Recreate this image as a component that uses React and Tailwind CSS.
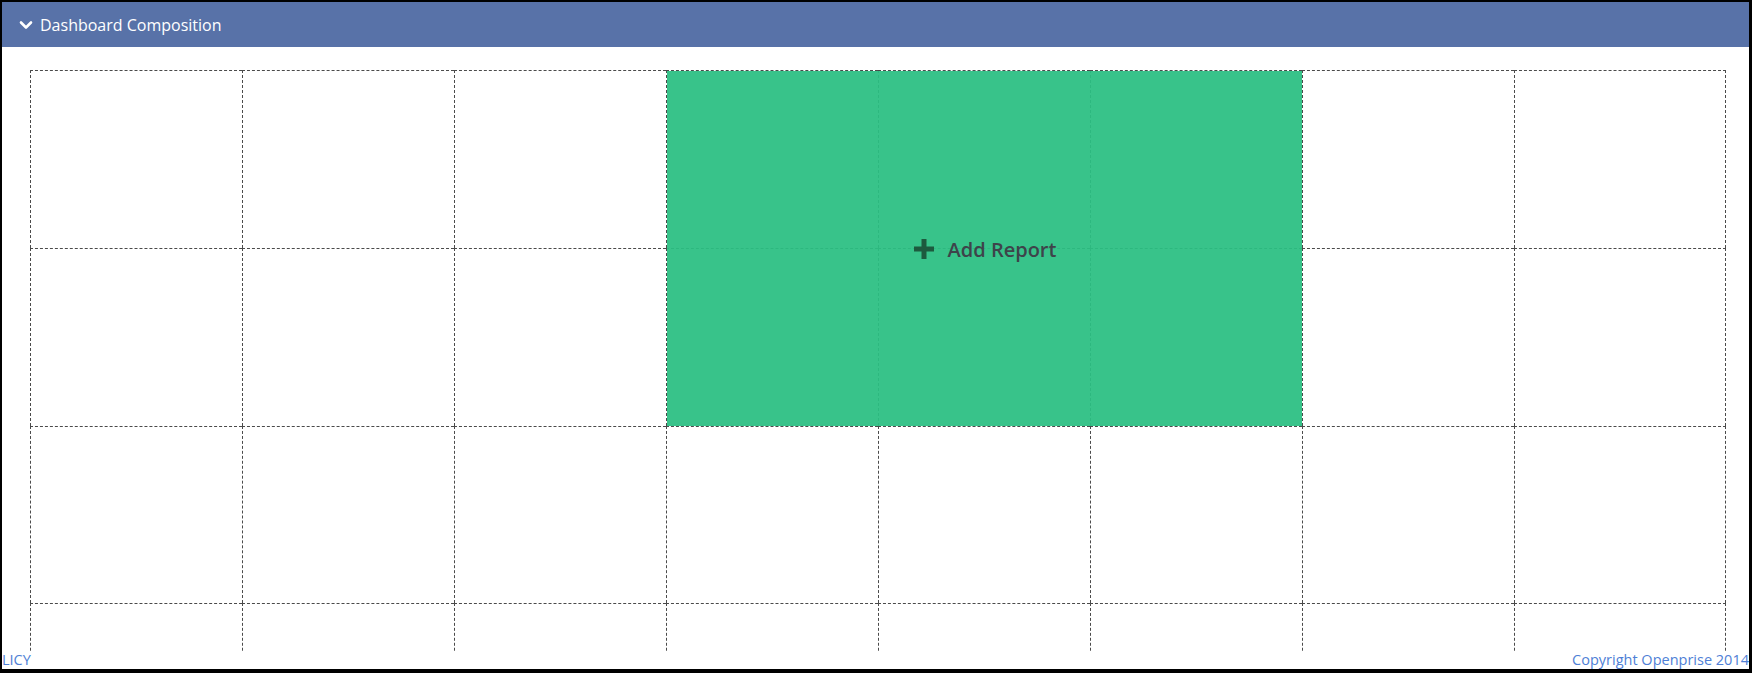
import React from 'react';

// Dashboard composition editor: 8-column layout grid with a report slot
const COLS = 8;
const ROWS = 4;

function ChevronDown() {
  return (
    <svg width="14" height="10" viewBox="0 0 14 10" className="shrink-0">
      <polyline points="2,2.5 7,7.5 12,2.5" fill="none" stroke="#fff" strokeWidth="2.6" strokeLinecap="round" strokeLinejoin="round" />
    </svg>
  );
}

function Plus() {
  return (
    <svg width="22" height="22" viewBox="0 0 22 22" className="shrink-0">
      <rect x="8.5" y="1" width="5" height="20" fill="#1d5a3e" />
      <rect x="1" y="8.5" width="20" height="5" fill="#1d5a3e" />
    </svg>
  );
}

export default function App() {
  const cells = [];
  for (let r = 0; r < ROWS; r++) {
    for (let c = 0; c < COLS; c++) {
      cells.push(
        <div
          key={`${r}-${c}`}
          className={`border-t border-l border-dashed border-[#4a4a4a] ${c === COLS - 1 ? 'border-r' : ''}`}
          style={{ gridRow: r + 1, gridColumn: c + 1 }}
        />
      );
    }
  }

  return (
    <div className="w-[1752px] h-[673px] bg-black pt-[2px] pl-[2px] pr-[3px] pb-[4px] font-['Open_Sans',sans-serif]">
      <div className="flex flex-col h-full bg-white overflow-hidden">
        <div className="h-[45px] shrink-0 bg-[#5872a8] flex items-center pl-[17px] gap-[7px]">
          <ChevronDown />
          <span className="text-white text-[16px]">Dashboard Composition</span>
        </div>

        <div className="flex-1 overflow-hidden pl-[28px] pt-[23px]">
          <div className="grid grid-cols-[repeat(8,212px)] grid-rows-[178px_178px_177px_177px]">
            {cells}
            <div className="col-start-4 col-end-7 row-start-1 row-end-3 mt-[1px] ml-[1px] bg-[#2cbf83]/[0.94] flex items-center justify-center gap-[13px] cursor-pointer">
              <Plus />
              <span className="text-[20px] font-semibold text-[#3e434a] pt-[2px]">Add Report</span>
            </div>
          </div>
        </div>

        <div className="h-[18px] shrink-0 flex items-end justify-between text-[14.5px] leading-[18px] text-[#4f7fd6]">
          <a>LICY</a>
          <a>Copyright Openprise 2014</a>
        </div>
      </div>
    </div>
  );
}
